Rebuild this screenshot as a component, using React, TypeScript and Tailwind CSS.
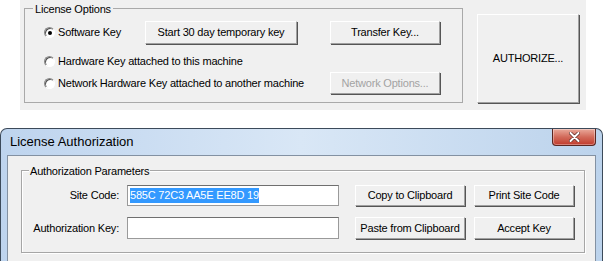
import React from 'react';

const font = { fontFamily: '"Liberation Sans", Arial, sans-serif' };

// classic raised push button
function WinButton({
  label,
  className = '',
  disabled = false,
}: {
  label: string;
  className?: string;
  disabled?: boolean;
}) {
  return (
    <div
      className={
        'flex shrink-0 items-center justify-center border border-t-white border-l-white border-r-[#a0a0a0] border-b-[#a0a0a0] bg-[#f0f0f0] shadow-[1px_1px_0_#555] text-[11px] tracking-[-0.2px] ' +
        (disabled ? 'text-[#a3a3a3] ' : 'text-black ') +
        className
      }
    >
      {label}
    </div>
  );
}

function Radio({ checked = false, label }: { checked?: boolean; label: string }) {
  return (
    <div className="flex items-center gap-[3px]">
      <span className="flex h-[11px] w-[11px] shrink-0 items-center justify-center rounded-full border border-t-[#8a8a8a] border-l-[#8a8a8a] border-r-white border-b-white bg-white shadow-[inset_1px_1px_0_#555]">
        {checked && <span className="h-[4px] w-[4px] rounded-full bg-black" />}
      </span>
      <span className="whitespace-nowrap text-[11px] tracking-[-0.2px] text-black">{label}</span>
    </div>
  );
}

function LicenseOptions() {
  return (
    <div className="flex h-[110px] bg-white pl-[20px]">
      <div className="flex h-full w-[566px] items-start bg-[#f0f0f0]">
        {/* group box */}
        <div className="relative ml-[4px] mt-[8px] h-[95px] w-[439px] border border-[#a9a9a9] pl-[19px] pt-[12px]">
          <span className="absolute -top-[8px] left-[8px] bg-[#f0f0f0] px-[2px] text-[11px] tracking-[-0.2px] text-black">
            License Options
          </span>
          <div className="flex h-[23px] items-center">
            <div className="w-[101px]">
              <Radio checked label="Software Key" />
            </div>
            <WinButton label="Start 30 day temporary key" className="h-[23px] w-[152px]" />
            <WinButton label="Transfer Key..." className="ml-[33px] h-[23px] w-[110px]" />
          </div>
          <div className="mt-[6px] flex h-[22px] items-center">
            <Radio label="Hardware Key attached to this machine" />
          </div>
          <div className="flex h-[22px] items-center">
            <div className="w-[286px]">
              <Radio label="Network Hardware Key attached to another machine" />
            </div>
            <WinButton disabled label="Network Options..." className="h-[22px] w-[110px]" />
          </div>
        </div>
        <WinButton label="AUTHORIZE..." className="ml-[14px] mt-[14px] h-[89px] w-[102px]" />
      </div>
    </div>
  );
}

function CloseButton() {
  return (
    <div className="absolute right-[6px] top-0 flex h-[17px] w-[44px] items-center justify-center rounded-b-[4px] border border-t-0 border-[#5b2620] bg-gradient-to-b from-[#e9a99b] via-[#d26a5a] to-[#c0392b] shadow-[inset_0_0_0_1px_rgba(255,255,255,0.35)]">
      <svg width="11" height="10" viewBox="0 0 11 10">
        <path d="M1.5 1 L9.5 9 M9.5 1 L1.5 9" stroke="#5b2620" strokeWidth="3.4" strokeLinecap="round" />
        <path d="M1.5 1 L9.5 9 M9.5 1 L1.5 9" stroke="#fff" strokeWidth="2" strokeLinecap="round" />
      </svg>
    </div>
  );
}

function LicenseAuthorization() {
  return (
    <div className="relative mt-[18px] flex h-[133px] flex-col rounded-t-[7px] border border-b-0 border-[#3c4a5a] bg-gradient-to-r from-[#bed4ee] via-[#d9e7f6] to-[#bcd3ec] px-[6px]">
      <CloseButton />
      <div className="flex h-[26px] shrink-0 items-center pl-[3px] text-[13px] text-black">
        License Authorization
      </div>
      <div className="flex-1 border border-b-0 border-[#8391a2] bg-[#f0f0f0] pl-[13px] pr-[10px] pt-[14px]">
        <div className="relative h-[83px] w-[564px] border border-[#a6a6a6] pt-[14px] shadow-[inset_1px_1px_0_#fff,1px_1px_0_#fff]">
          <span className="absolute -top-[8px] left-[7px] bg-[#f0f0f0] px-[1px] text-[11px] tracking-[-0.2px] text-black">
            Authorization Parameters
          </span>
          <div className="flex h-[21px] items-center">
            <div className="w-[98px] pr-[1px] text-right text-[11px] tracking-[-0.2px] text-black">Site Code:</div>
            <div className="ml-[7px] flex h-[21px] w-[212px] items-center border border-[#9a9a9a] border-t-[#6f6f6f] bg-white pl-[2px]">
              <span className="bg-[#3399ff] text-[11px] leading-[15px] tracking-[-0.2px] text-white">
                585C 72C3 AA5E EE8D 19
              </span>
            </div>
            <WinButton label="Copy to Clipboard" className="ml-[16px] h-[21px] w-[110px]" />
            <WinButton label="Print Site Code" className="ml-[9px] h-[21px] w-[100px]" />
          </div>
          <div className="mt-[11px] flex h-[22px] items-center">
            <div className="w-[98px] pr-[1px] text-right text-[11px] tracking-[-0.2px] text-black">Authorization Key:</div>
            <div className="ml-[7px] h-[22px] w-[212px] border border-[#9a9a9a] border-t-[#6f6f6f] bg-white" />
            <WinButton label="Paste from Clipboard" className="ml-[16px] h-[22px] w-[110px]" />
            <WinButton label="Accept Key" className="ml-[9px] h-[22px] w-[100px]" />
          </div>
        </div>
      </div>
    </div>
  );
}

export default function App() {
  return (
    <div className="h-[261px] w-[603px] overflow-hidden bg-white" style={font}>
      <LicenseOptions />
      <LicenseAuthorization />
    </div>
  );
}
